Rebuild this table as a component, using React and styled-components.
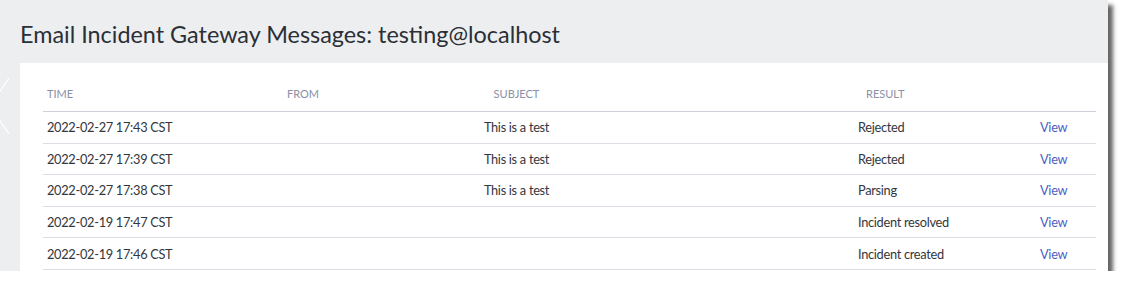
import React from "react";
import styled, { createGlobalStyle } from "styled-components";

const GlobalStyle = createGlobalStyle`
  html, body {
    margin: 0;
    padding: 0;
    background: #ffffff;
  }
  body {
    font-family: Lato, "Noto Sans", sans-serif;
  }
`;

function App() {
  const messages = [
    { id: 1, time: "2022-02-27 17:43 CST", from: "", subject: "This is a test", result: "Rejected" },
    { id: 2, time: "2022-02-27 17:39 CST", from: "", subject: "This is a test", result: "Rejected" },
    { id: 3, time: "2022-02-27 17:38 CST", from: "", subject: "This is a test", result: "Parsing" },
    { id: 4, time: "2022-02-19 17:47 CST", from: "", subject: "", result: "Incident resolved" },
    { id: 5, time: "2022-02-19 17:46 CST", from: "", subject: "", result: "Incident created" },
  ];

  return (
    <>
      <GlobalStyle />
      <Panel>
        <Chevron width="12" height="60" viewBox="0 0 12 60">
          <polyline points="9,2 -10,30 9,58" fill="none" stroke="#ffffff" strokeWidth="1.2" />
        </Chevron>
        <Title>Email Incident Gateway Messages: testing@localhost</Title>
        <Card>
          <Table>
            <HeadRow>
              <HeadCell $col={1}>Time</HeadCell>
              <HeadCell $col={2}>From</HeadCell>
              <HeadCell $col={3} $center>Subject</HeadCell>
              <HeadCell $col={5} $indent>Result</HeadCell>
              <HeadCell $col={6}></HeadCell>
            </HeadRow>
            {messages.map((msg) => {
              return (
                <Row key={msg.id}>
                  <Cell $col={1}>{msg.time}</Cell>
                  <Cell $col={2}>{msg.from}</Cell>
                  <Cell $col={3} $center>{msg.subject}</Cell>
                  <Cell $col={5}>{msg.result}</Cell>
                  <Cell $col={6}>
                    <ViewLink href="#">View</ViewLink>
                  </Cell>
                </Row>
              );
            })}
          </Table>
        </Card>
      </Panel>
    </>
  );
}

export default App;

const Panel = styled.div`
  position: relative;
  width: 1108px;
  height: 271px;
  background: #edeef0;
  box-shadow: 5px 5px 4px rgba(0, 0, 0, 0.6);
  display: flex;
  flex-direction: column;
`;

const Chevron = styled.svg`
  position: absolute;
  left: 0;
  top: 76px;
`;

const Title = styled.h1`
  margin: 0;
  padding: 19px 0 0 20px;
  height: 63px;
  flex: none;
  box-sizing: border-box;
  font-size: 23.4px;
  font-weight: 400;
  line-height: 30px;
  color: #2b2f36;
  white-space: nowrap;
`;

const Card = styled.div`
  flex: 1;
  margin-left: 20px;
  background: #ffffff;
  padding: 0 12px 0 23px;
`;

const columns = "240px 110px 247px 214px 182px 1fr";

const Table = styled.div`
  display: flex;
  flex-direction: column;
`;

const HeadRow = styled.div`
  display: grid;
  grid-template-columns: ${columns};
  height: 49px;
  box-sizing: border-box;
  border-bottom: 1px solid #cdd0dc;
  align-items: end;
  padding-bottom: 9px;
`;

const HeadCell = styled.div`
  grid-column: ${(p) => p.$col};
  grid-row: 1;
  font-size: 11px;
  line-height: 16px;
  text-transform: uppercase;
  color: #8a90a6;
  text-align: ${(p) => (p.$center ? "center" : "left")};
  padding-left: ${(p) => (p.$indent ? "12px" : p.$center ? "0" : "4px")};
`;

const Row = styled.div`
  display: grid;
  grid-template-columns: ${columns};
  height: 31.6px;
  box-sizing: border-box;
  border-bottom: 1px solid #dcdee6;
  align-items: center;
`;

const Cell = styled.div`
  grid-column: ${(p) => p.$col};
  grid-row: 1;
  font-size: 12.8px;
  letter-spacing: -0.3px;
  color: #33363d;
  text-align: ${(p) => (p.$center ? "center" : "left")};
  padding-left: ${(p) => (p.$center ? "0" : "4px")};
  white-space: nowrap;
`;

const ViewLink = styled.a`
  color: #4a5fc4;
  text-decoration: none;
`;
